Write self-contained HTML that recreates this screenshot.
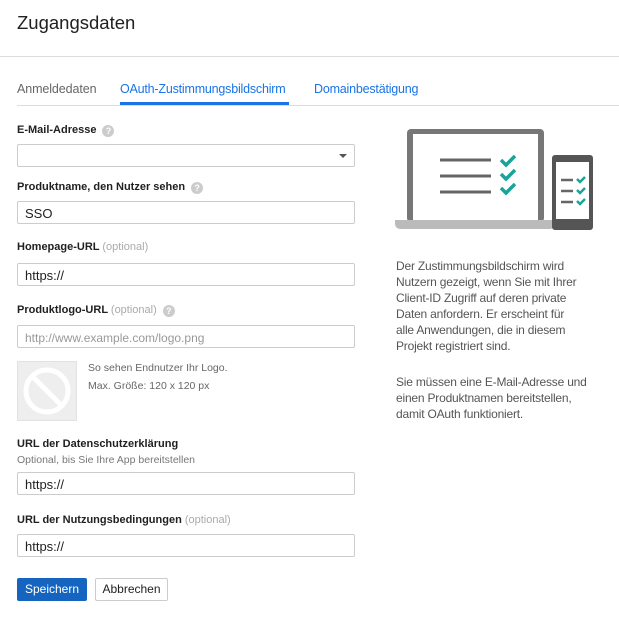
<!DOCTYPE html>
<html><head><style>
*{box-sizing:border-box;margin:0;padding:0}
body{width:619px;height:625px;background:#fff;font-family:"Liberation Sans",Arial,sans-serif;color:#212121;position:relative;overflow:hidden}
.a{position:absolute}
.lbl{font-size:11px;font-weight:bold;color:#212121}
.opt{font-weight:normal;color:#aaa}
.q{display:inline-block;width:12px;height:12px;border-radius:50%;background:#ccc;color:#fff;font-size:9px;text-align:center;line-height:12px;font-weight:bold;vertical-align:-1px;margin-left:6px}
.in{position:absolute;left:17px;width:338px;height:23px;border:1px solid #ccc;border-radius:2px;font-size:13px;padding:4px 0 0 7px;color:#212121}
.rt{font-size:12px;color:#555;line-height:16px;left:396px;width:212px;letter-spacing:-0.2px}
</style></head><body>
<div class="a" style="left:17px;top:12px;font-size:18.5px;color:#212121">Zugangsdaten</div>
<div class="a" style="left:0;top:56px;width:619px;height:1px;background:#ddd"></div>
<div class="a" style="left:17px;top:82px;font-size:12.5px;color:#666;letter-spacing:-0.1px">Anmeldedaten</div>
<div class="a" style="left:120px;top:82px;font-size:12.5px;color:#1a73e8;letter-spacing:-0.2px">OAuth-Zustimmungsbildschirm</div>
<div class="a" style="left:314px;top:82px;font-size:12.5px;color:#1a73e8;letter-spacing:-0.2px">Domainbestätigung</div>
<div class="a" style="left:17px;top:105px;width:602px;height:1px;background:#ddd"></div>
<div class="a" style="left:120px;top:102px;width:169px;height:3px;background:#1a73e8"></div>

<div class="a lbl" style="left:17px;top:124px">E-Mail-Adresse<span class="q">?</span></div>
<div class="in" style="top:144px"><span class="a" style="right:7px;top:9px;border-left:4px solid transparent;border-right:4px solid transparent;border-top:4px solid #555"></span></div>
<div class="a lbl" style="left:17px;top:181px">Produktname, den Nutzer sehen<span class="q">?</span></div>
<div class="in" style="top:201px">SSO</div>
<div class="a lbl" style="left:17px;top:241px">Homepage-URL <span class="opt">(optional)</span></div>
<div class="in" style="top:263px">https://</div>
<div class="a lbl" style="left:17px;top:304px">Produktlogo-URL <span class="opt">(optional)</span><span class="q">?</span></div>
<div class="in" style="top:325px;color:#999;font-size:12px;padding-top:5px">http://www.example.com/logo.png</div>
<div class="a" style="left:17px;top:361px;width:60px;height:60px;background:#eee;border:1px solid #e2e2e2">
<svg width="58" height="58" viewBox="0 0 58 58"><circle cx="29" cy="29" r="21" fill="none" stroke="#fff" stroke-width="5"/><line x1="15" y1="15" x2="43" y2="43" stroke="#fff" stroke-width="5"/></svg></div>
<div class="a" style="left:88px;top:362px;font-size:10.5px;color:#666">So sehen Endnutzer Ihr Logo.</div>
<div class="a" style="left:88px;top:380px;font-size:10.5px;color:#666">Max. Größe: 120 x 120 px</div>
<div class="a lbl" style="left:17px;top:438px">URL der Datenschutzerklärung</div>
<div class="a" style="left:17px;top:454px;font-size:10.5px;color:#777">Optional, bis Sie Ihre App bereitstellen</div>
<div class="in" style="top:472px">https://</div>
<div class="a lbl" style="left:17px;top:514px">URL der Nutzungsbedingungen <span class="opt">(optional)</span></div>
<div class="in" style="top:534px">https://</div>
<div class="a" style="left:17px;top:578px;width:70px;height:23px;background:#1565c0;border-radius:2px;color:#fff;font-size:12px;text-align:center;line-height:23px">Speichern</div>
<div class="a" style="left:95px;top:578px;width:73px;height:23px;border:1px solid #ccc;border-radius:2px;color:#212121;font-size:12px;text-align:center;line-height:21px">Abbrechen</div>

<svg class="a" style="left:380px;top:120px" width="239" height="120" viewBox="0 0 239 120">
<rect x="27" y="9" width="137" height="93" rx="4" fill="#777"/>
<rect x="33" y="14" width="125" height="86" fill="#fff"/>
<path d="M15 100 H175 V104 a5 5 0 0 1 -5 5 H20 a5 5 0 0 1 -5 -5z" fill="#bbb"/>
<g stroke="#666" stroke-width="3"><line x1="60" y1="40" x2="111" y2="40"/><line x1="60" y1="56" x2="111" y2="56"/><line x1="60" y1="72" x2="111" y2="72"/></g>
<g stroke="#1aa39a" stroke-width="3.5" fill="none"><path d="M121 40 l5 5 9 -9"/><path d="M121 54 l5 5 9 -9"/><path d="M121 68 l5 5 9 -9"/></g>
<rect x="172" y="35" width="41" height="75" rx="3" fill="#555"/>
<rect x="176" y="42" width="33" height="57" fill="#fff"/>
<g stroke="#666" stroke-width="2.5"><line x1="181" y1="60" x2="193" y2="60"/><line x1="181" y1="71" x2="193" y2="71"/><line x1="181" y1="82" x2="193" y2="82"/></g>
<g stroke="#1aa39a" stroke-width="2.5" fill="none"><path d="M197 59 l3 3 5 -5"/><path d="M197 70 l3 3 5 -5"/><path d="M197 81 l3 3 5 -5"/></g>
</svg>
<div class="a rt" style="top:258px">Der Zustimmungsbildschirm wird<br>Nutzern gezeigt, wenn Sie mit Ihrer<br>Client-ID Zugriff auf deren private<br>Daten anfordern. Er erscheint für<br>alle Anwendungen, die in diesem<br>Projekt registriert sind.</div>
<div class="a rt" style="top:374px">Sie müssen eine E-Mail-Adresse und<br>einen Produktnamen bereitstellen,<br>damit OAuth funktioniert.</div>
</body></html>
